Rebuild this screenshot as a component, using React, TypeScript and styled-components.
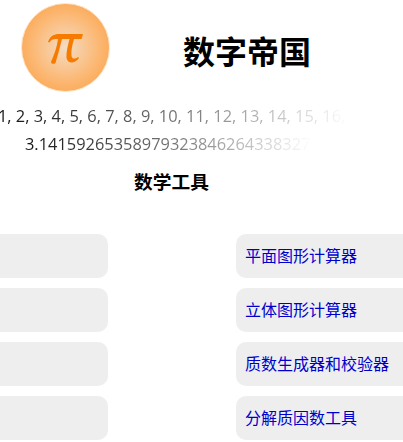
import React from "react";
import styled, { createGlobalStyle } from "styled-components";

const GlobalStyle = createGlobalStyle`
  html, body {
    margin: 0;
    padding: 0;
    background: #fff;
    overflow: hidden;
  }
  body {
    font-family: "Open Sans", "Noto Sans", "Noto Sans CJK SC", sans-serif;
  }
`;

const Page = styled.div`
  width: 403px;
  height: 442px;
  overflow: hidden;
`;

const Header = styled.header`
  display: grid;
  grid-template-columns: 88px 1fr;
  align-items: center;
  height: 92px;
  padding: 2px 0 0 21px;
  box-sizing: border-box;
`;

const Logo = styled.div`
  width: 89px;
  height: 89px;
  border-radius: 50%;
  box-sizing: border-box;
  border: 1px solid #fde3c8;
  background: radial-gradient(circle, #f4dcc4 0%, #fbbb7a 50%, #fb9a38 100%);
  display: flex;
  align-items: center;
  justify-content: center;
`;

const Title = styled.h1`
  margin: 6px 0 0;
  padding-right: 18px;
  text-align: center;
  font-family: "Noto Sans CJK SC", sans-serif;
  font-size: 32px;
  line-height: 40px;
  font-weight: 700;
  color: #000;
`;

const Sequence = styled.div<{ $indent: number; $width: number }>`
  margin-left: ${(p) => p.$indent}px;
  width: ${(p) => p.$width}px;
  height: 28px;
  line-height: 28px;
  font-size: 16.4px;
  color: #111;
  white-space: nowrap;
  -webkit-mask-image: linear-gradient(to right, #000 0%, rgba(0, 0, 0, 0.55) 55%, transparent 100%);
  mask-image: linear-gradient(to right, #000 0%, rgba(0, 0, 0, 0.55) 55%, transparent 100%);
`;

const Sequences = styled.div`
  padding-top: 10px;
`;

const SectionTitle = styled.h2`
  margin: 10px 0 0;
  text-align: center;
  padding-right: 60px;
  font-family: "Noto Sans CJK SC", sans-serif;
  font-size: 18.72px;
  line-height: 26px;
  font-weight: 700;
  color: #000;
`;

const ToolGrid = styled.div`
  display: grid;
  grid-template-columns: 108px 167px;
  column-gap: 128px;
  row-gap: 10px;
  margin-top: 40px;
`;

const ToolLink = styled.a<{ $cut?: boolean }>`
  height: 44px;
  display: flex;
  align-items: center;
  box-sizing: border-box;
  padding: 0 0 2px 9px;
  background: #eee;
  border-radius: ${(p) => (p.$cut ? "0 10px 10px 0" : "10px 0 0 10px")};
  font-family: "Noto Sans CJK SC", sans-serif;
  font-size: 16px;
  color: #0000cd;
  text-decoration: none;
  white-space: nowrap;
`;

const tools = ["平面图形计算器", "立体图形计算器", "质数生成器和校验器", "分解质因数工具"];

export default function App() {
  return (
    <Page>
      <GlobalStyle />
      <Header>
        <Logo>
          <svg width="40" height="40" viewBox="0 0 40 40" fill="none">
            <path
              d="M2 15 C4 9 8 7 13 7 L37 7 L35.5 12 L28 12 C26 19 25 24 25.5 29 C26 32 29 32.5 32 30 L33 31 C30 36 22 38 20.5 31 C20 25 22 18 23.5 12 L16 12 C14 20 12 28 9.5 36 C8 37.5 5 37 5 35 C8 28 11 20 12 12 C8 12 5.5 12 3.5 15.5 Z"
              fill="#f57c00"
            />
          </svg>
        </Logo>
        <Title>数字帝国</Title>
      </Header>
      <Sequences>
        <Sequence $indent={-2} $width={352}>
          1, 2, 3, 4, 5, 6, 7, 8, 9, 10, 11, 12, 13, 14, 15, 16,
        </Sequence>
        <Sequence $indent={25} $width={286}>
          3.14159265358979323846264338327
        </Sequence>
      </Sequences>
      <SectionTitle>数学工具</SectionTitle>
      <ToolGrid>
        {tools.map((name) => (
          <React.Fragment key={name}>
            <ToolLink as="div" $cut aria-hidden="true" />
            <ToolLink href="#">{name}</ToolLink>
          </React.Fragment>
        ))}
      </ToolGrid>
    </Page>
  );
}
